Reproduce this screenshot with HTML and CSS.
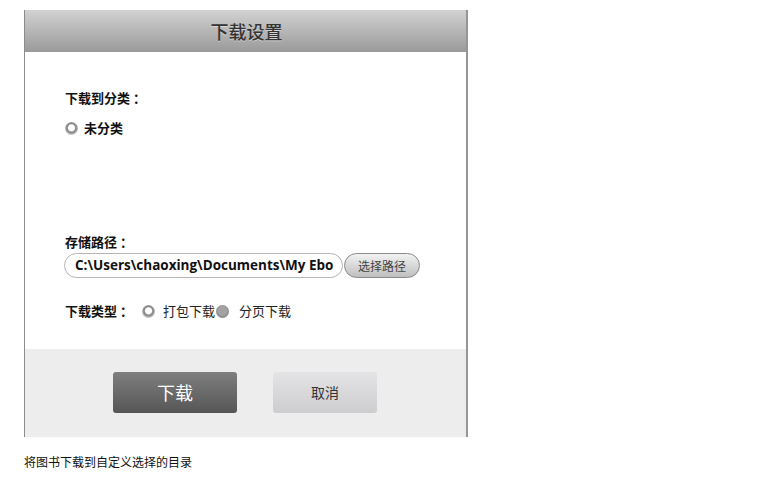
FILE: index.html
```html
<!DOCTYPE html>
<html lang="zh">
<head>
<meta charset="utf-8">
<title>下载设置</title>
<link rel="stylesheet" href="styles.css">
</head>
<body>
<div class="dialog">
  <div class="header">下载设置</div>
  <div class="content">
    <div class="label label-first">下载到分类 ：</div>
    <div class="radio-row">
      <span class="radio"></span>
      <span class="bold">未分类</span>
    </div>
    <div class="label label-path">存储路径 ：</div>
    <div class="path-row">
      <div class="path-input">C:\Users\chaoxing\Documents\My Ebo</div>
      <div class="path-btn">选择路径</div>
    </div>
    <div class="type-row">
      <span class="label">下载类型 ：</span>
      <span class="radio radio-type"></span>
      <span class="opt">打包下载</span>
      <span class="radio radio-filled"></span>
      <span class="opt opt-2">分页下载</span>
    </div>
  </div>
  <div class="footer">
    <div class="btn btn-primary">下载</div>
    <div class="btn btn-cancel">取消</div>
  </div>
</div>
<div class="caption">将图书下载到自定义选择的目录</div>
</body>
</html>
```

FILE: styles.css
```css
* { box-sizing: border-box; }
body {
  margin: 0;
  padding: 10px 0 0 24px;
  background: #fff;
  font-family: "Noto Sans CJK SC", "Noto Sans", sans-serif;
  color: #111;
}
.dialog {
  width: 444px;
  border-left: 1px solid #8c8c8c;
  border-right: 2px solid #969696;
  display: flex;
  flex-direction: column;
}
.header {
  height: 42px;
  background: linear-gradient(#d2d2d2, #9b9a9a);
  text-align: center;
  font-size: 18px;
  font-weight: 500;
  line-height: 42px;
  color: #333;
  text-shadow: 0 1px 0 rgba(255,255,255,0.45);
  padding-left: 2px;
}
.content {
  height: 297px;
  background: #fff;
  padding-left: 40px;
  display: flex;
  flex-direction: column;
}
.label {
  font-size: 13px;
  font-weight: bold;
  line-height: 20px;
  color: #111;
  white-space: pre;
}
.label-first { margin-top: 36px; }
.radio-row {
  margin-top: 10px;
  display: flex;
  align-items: center;
  height: 20px;
}
.bold { font-size: 13px; font-weight: bold; line-height: 20px; }
.radio {
  width: 13px;
  height: 13px;
  border-radius: 50%;
  background: radial-gradient(circle at 50% 45%, #fff 0 3px, #d8d8d8 3.4px, #858585 4.2px, #9a9a9a 5.5px, #c4c4c4 6.5px);
  display: inline-block;
  flex: none;
}
.radio-row .radio { margin: 0 6px 0 0; }
.label-path { margin-top: 94px; }
.path-row {
  margin-top: 1px;
  display: flex;
  align-items: center;
  margin-left: -1px;
}
.path-input {
  width: 279px;
  height: 25px;
  border: 1px solid #b4b4b4;
  border-radius: 13px;
  padding-left: 10px;
  font-family: "Open Sans", "Noto Sans", sans-serif;
  font-weight: bold;
  font-size: 13.5px;
  line-height: 23px;
  white-space: nowrap;
  overflow: hidden;
  color: #111;
}
.path-btn {
  margin-left: 1px;
  width: 76px;
  height: 25px;
  border: 1px solid #8a8a8a;
  border-radius: 13px;
  background: linear-gradient(#f2f2f2, #bfbfbf);
  font-size: 12px;
  line-height: 23px;
  text-align: center;
  color: #444;
}
.type-row {
  margin-top: 23px;
  display: flex;
  align-items: center;
  height: 20px;
}
.radio-type { margin-left: 9px; margin-right: 8px; }
.opt { font-size: 13px; line-height: 20px; color: #222; }
.radio-filled {
  background: radial-gradient(circle at 50% 45%, #a3a3a3 0 4px, #8a8a8a 6.5px);
  margin-left: 1px;
  margin-right: 10px;
}
.footer {
  height: 88px;
  background: #ededed;
  display: flex;
  align-items: flex-start;
  padding: 23px 0 0 88px;
  gap: 36px;
}
.btn {
  height: 41px;
  border-radius: 3px;
  text-align: center;
}
.btn-primary {
  width: 124px;
  background: linear-gradient(#7e7e7e, #565656);
  color: #fff;
  font-size: 18px;
  line-height: 41px;
}
.btn-cancel {
  width: 104px;
  background: linear-gradient(#e4e4e6, #cdcdcf);
  color: #333;
  font-size: 14px;
  line-height: 41px;
}
.caption {
  margin-top: 17px;
  font-size: 12px;
  line-height: 16px;
  color: #111;
}
```
